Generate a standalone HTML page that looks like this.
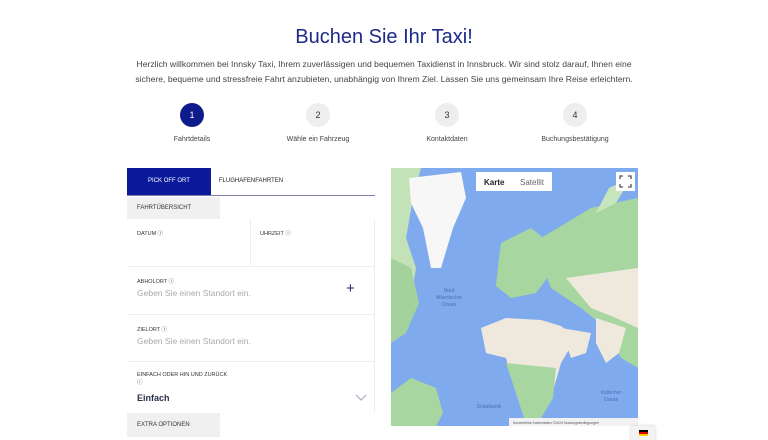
<!DOCTYPE html>
<html><head><meta charset="utf-8"><style>
*{margin:0;padding:0;box-sizing:border-box}
body{width:768px;height:440px;overflow:hidden;background:#fff;font-family:"Liberation Sans",sans-serif;position:relative;color:#333}
.abs{position:absolute}
h1{position:absolute;top:26px;left:0;width:768px;text-align:center;font-size:20px;font-weight:normal;color:#1d2a8a}
.p{position:absolute;top:57px;left:126px;width:516px;text-align:center;font-size:8.6px;line-height:15px;color:#444}
.c{position:absolute;width:24px;height:24px;border-radius:50%;background:#eee;font-size:9px;text-align:center;line-height:24px;color:#333;top:103px}
.sl{position:absolute;top:136px;font-size:7px;color:#444;text-align:center;width:120px}
.lab{position:absolute;font-size:5.5px;color:#333}
.ph{position:absolute;font-size:8.5px;color:#aaa}
.bd{position:absolute;border-bottom:1px solid #eee}
</style></head><body>
<h1>Buchen Sie Ihr Taxi!</h1>
<div class="p">Herzlich willkommen bei Innsky Taxi, Ihrem zuverlässigen und bequemen Taxidienst in Innsbruck. Wir sind stolz darauf, Ihnen eine<br>sichere, bequeme und stressfreie Fahrt anzubieten, unabhängig von Ihrem Ziel. Lassen Sie uns gemeinsam Ihre Reise erleichtern.</div>
<div class="c" style="left:180px;background:#0d1b8c;color:#fff">1</div>
<div class="c" style="left:306px">2</div>
<div class="c" style="left:435px">3</div>
<div class="c" style="left:563px">4</div>
<div class="sl" style="left:132px">Fahrtdetails</div>
<div class="sl" style="left:258px">Wähle ein Fahrzeug</div>
<div class="sl" style="left:387px">Kontaktdaten</div>
<div class="sl" style="left:515px">Buchungsbestätigung</div>

<div class="abs" style="left:127px;top:168px;width:84px;height:27px;background:#0a1a9a;color:#fff;font-size:6px;text-align:center;line-height:27px">PICK OFF ORT</div>
<div class="abs" style="left:211px;top:168px;width:80px;height:27px;font-size:6px;text-align:center;line-height:27px;color:#222">FLUGHAFENFAHRTEN</div>
<div class="abs" style="left:127px;top:195px;width:248px;height:1px;background:#7d80a8"></div>
<div class="abs" style="left:127px;top:197px;width:93px;height:22px;background:#f0f0f0;font-size:6px;line-height:22px;padding-left:10px;color:#333">FAHRTÜBERSICHT</div>
<div class="abs" style="left:250px;top:219px;width:1px;height:48px;background:#eee"></div>
<div class="abs" style="left:374px;top:219px;width:1px;height:194px;background:#eee"></div>
<div class="lab" style="left:137px;top:229px">DATUM ⓘ</div>
<div class="lab" style="left:260px;top:229px">UHRZEIT ⓘ</div>
<div class="bd" style="left:127px;top:266px;width:248px"></div>
<div class="lab" style="left:137px;top:277px">ABHOLORT ⓘ</div>
<div class="ph" style="left:137px;top:288px">Geben Sie einen Standort ein.</div>
<div class="abs" style="left:346px;top:280px;font-size:15px;color:#1d2a6a">+</div>
<div class="bd" style="left:127px;top:314px;width:248px"></div>
<div class="lab" style="left:137px;top:325px">ZIELORT ⓘ</div>
<div class="ph" style="left:137px;top:336px">Geben Sie einen Standort ein.</div>
<div class="bd" style="left:127px;top:361px;width:248px"></div>
<div class="lab" style="left:137px;top:372px">EINFACH ODER HIN UND ZURÜCK<br>ⓘ</div>
<div class="abs" style="left:137px;top:393px;font-size:9px;font-weight:bold;color:#2a2f4a">Einfach</div>
<svg class="abs" style="left:355px;top:394px" width="12" height="8"><path d="M1 1 L6 6 L11 1" stroke="#aab" fill="none" stroke-width="1.2"/></svg>
<div class="abs" style="left:127px;top:413px;width:93px;height:24px;background:#f0f0f0;font-size:6px;line-height:24px;padding-left:10px;color:#333">EXTRA OPTIONEN</div>

<svg class="abs" style="left:391px;top:168px" width="247" height="258" viewBox="0 0 247 258">
<rect width="247" height="258" fill="#80aaee"/>
<path d="M0 0 L30 0 L22 30 L15 70 L25 100 L20 130 L0 140Z" fill="#c4e2b8"/>
<path d="M0 90 L20 100 L28 135 L15 165 L0 175Z" fill="#a3d29c"/>
<path d="M18 10 L70 4 L75 30 L62 60 L50 100 L40 100 L32 60 L20 35Z" fill="#f7f7f7"/>
<path d="M110 75 L140 60 L165 80 L160 105 L145 125 L120 130 L105 118 L108 90Z" fill="#a8d6a0"/>
<path d="M150 70 L200 40 L247 30 L247 200 L230 190 L215 160 L190 140 L160 120 L150 95Z" fill="#a8d6a0"/>
<path d="M205 45 L218 20 L240 10 L225 35Z" fill="#c8e6bd"/>
<path d="M175 110 L247 100 L247 160 L225 150 L200 140Z" fill="#efe9dd"/>
<path d="M90 160 L115 150 L150 152 L170 158 L185 170 L170 195 L160 230 L150 250 L135 255 L125 225 L115 190 L95 185Z" fill="#efe9dd"/>
<path d="M115 195 L165 200 L162 230 L150 250 L135 255 L125 225Z" fill="#a8d6a0"/>
<path d="M170 160 L200 165 L195 185 L180 190Z" fill="#efe9dd"/>
<path d="M205 150 L235 160 L228 185 L215 195 L205 175Z" fill="#efe9dd"/>
<path d="M0 225 L20 210 L45 220 L52 245 L45 258 L0 258Z" fill="#a8d6a0"/>
<text x="58" y="124" font-size="5" fill="#4a6fb5" text-anchor="middle">Nord</text>
<text x="58" y="131" font-size="5" fill="#4a6fb5" text-anchor="middle">Atlantischer</text>
<text x="58" y="138" font-size="5" fill="#4a6fb5" text-anchor="middle">Ozean</text>
<text x="98" y="240" font-size="5" fill="#4a6fb5" text-anchor="middle">Südatlantik</text>
<text x="220" y="226" font-size="5" fill="#4a6fb5" text-anchor="middle">Indischer</text>
<text x="220" y="233" font-size="5" fill="#4a6fb5" text-anchor="middle">Ozean</text>
<rect x="85" y="4" width="76" height="19" fill="#fff"/>
<text x="93" y="17" font-size="8" font-weight="bold" fill="#222">Karte</text>
<text x="129" y="17" font-size="8" fill="#666">Satellit</text>
<rect x="225" y="4" width="19" height="19" fill="#fff"/>
<path d="M229 11v-3h3M240 11v-3h-3M229 16v3h3M240 16v3h-3" stroke="#555" fill="none" stroke-width="1.3"/>
<rect x="118" y="250" width="129" height="8" fill="#f2f2f2"/>
<text x="122" y="256" font-size="3.5" fill="#555">Kurzbefehle   Kartendaten ©2024   Nutzungsbedingungen</text>
</svg>
<div class="abs" style="left:631px;top:426px;width:24px;height:14px;background:#f3f3f3;box-shadow:0 0 3px #ccc"></div>
<div class="abs" style="left:639px;top:430px;width:9px;height:6px;background:linear-gradient(#000 33%,#d00 33% 66%,#fc0 66%)"></div>
</body></html>
